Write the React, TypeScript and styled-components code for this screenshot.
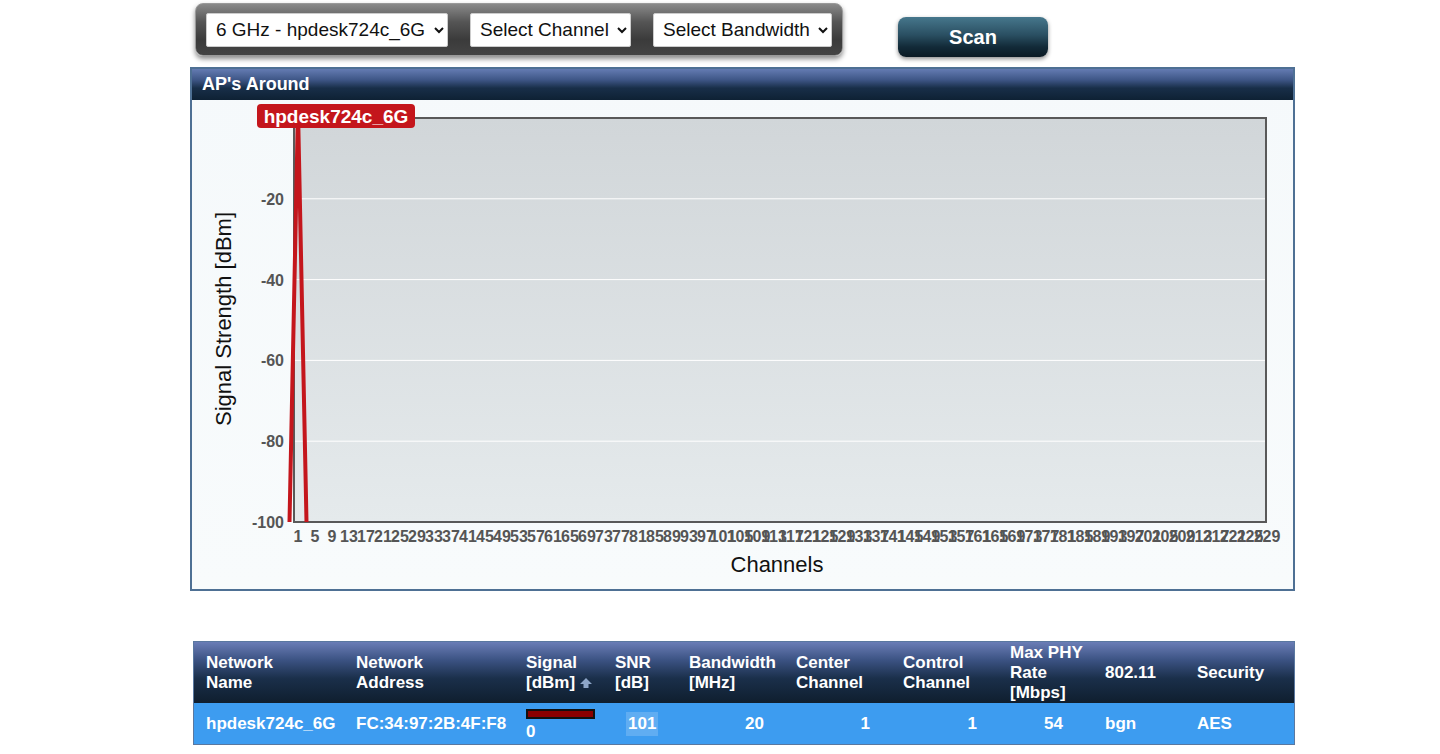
import React from 'react'
import styled, { createGlobalStyle } from 'styled-components'

const GlobalStyle = createGlobalStyle`
    body {
        margin: 0;
        background: #ffffff;
        font-family: 'Liberation Sans', Arial, sans-serif;
    }
`

const Page = styled.div`
    width: 1440px;
    padding-top: 3px;
`

const TopRow = styled.div`
    display: flex;
    align-items: flex-start;
    margin-left: 195px;
    gap: 55px;
    height: 64px;
`

const Toolbar = styled.div`
    display: flex;
    align-items: center;
    gap: 22px;
    width: 648px;
    height: 53px;
    box-sizing: border-box;
    padding: 0 10px;
    border: 1px solid #9a9a9a;
    border-radius: 8px;
    background: linear-gradient(#8a8a8a 0%, #555 35%, #3b3b3b 70%, #444 100%);
    box-shadow: 0 3px 5px rgba(0, 0, 0, 0.45);
`

const Select = styled.select<{ $w: number }>`
    width: ${(p) => p.$w}px;
    height: 34px;
    font-family: 'Liberation Sans', Arial, sans-serif;
    font-size: 19px;
    color: #111;
    background: #fff;
    border: 1px solid #ccc;
    border-radius: 2px;
    padding: 0 5px;
`

const ScanButton = styled.button`
    margin-top: 14px;
    width: 150px;
    height: 40px;
    border: none;
    border-radius: 8px;
    color: #fff;
    font-family: 'Liberation Sans', Arial, sans-serif;
    font-weight: bold;
    font-size: 20px;
    background: linear-gradient(#46778c 0%, #2a4f62 45%, #122a38 75%, #0b1a24 100%);
    box-shadow: 0 2px 4px rgba(0, 0, 0, 0.45);
`

const Panel = styled.div`
    margin-left: 190px;
    width: 1105px;
    box-sizing: border-box;
    border: 2px solid #4e7094;
    background: linear-gradient(#f5f9fb, #f8fbfc);
`

const PanelHeader = styled.div`
    height: 31px;
    display: flex;
    align-items: center;
    padding-left: 10px;
    color: #fff;
    font-weight: bold;
    font-size: 18px;
    background: linear-gradient(#647bb2 0%, #3e5686 35%, #182e48 62%, #0e2134 100%);
`

const Chart = styled.svg`
    display: block;
    width: 1101px;
    height: 489px;
    font-family: 'Liberation Sans', Arial, sans-serif;
`

const Table = styled.div`
    margin: 50px 0 0 193px;
    width: 1102px;
    box-sizing: border-box;
    border: 1px solid #5a78a0;
    color: #fff;
    font-weight: bold;
    font-size: 17px;
`

const cols = '150px 170px 89px 74px 107px 107px 107px 95px 92px 1fr'

const HeaderRow = styled.div`
    display: grid;
    grid-template-columns: ${cols};
    height: 61px;
    align-items: center;
    background: linear-gradient(#6a7db6 0%, #3b5282 30%, #1a2f4a 60%, #0f1e2e 100%);
    line-height: 20px;
`

const DataRow = styled.div`
    display: grid;
    grid-template-columns: ${cols};
    height: 41px;
    align-items: center;
    background: #3d9cf0;
`

const Cell = styled.div<{ $right?: number; $left?: number }>`
    padding-left: ${(p) => (p.$left !== undefined ? p.$left : 12)}px;
    padding-right: ${(p) => (p.$right !== undefined ? p.$right : 0)}px;
    text-align: ${(p) => (p.$right !== undefined ? 'right' : 'left')};
    white-space: nowrap;
`

const SignalCell = styled.div`
    padding-left: 12px;
    display: flex;
    flex-direction: column;
    align-items: flex-start;
    gap: 3px;
    margin-top: 4px;
`

const SignalBar = styled.div`
    width: 69px;
    height: 10px;
    box-sizing: border-box;
    border: 2px solid #111;
    background: #8b0000;
`

const Highlight = styled.span`
    display: inline-block;
    padding: 2px 2px;
    background: rgba(255, 255, 255, 0.18);
`

const plotX = 102
const plotY = 18
const plotW = 972
const plotH = 404
const yFor = (d: number) => plotY + (-d / 100) * plotH
const xFor = (c: number) => 106 + (c - 1) * 4.25

const channels: number[] = []
for (let c = 1; c <= 229; c += 4) channels.push(c)

const SortArrow = () => (
    <svg width="14" height="12" viewBox="0 0 14 12" style={{ marginLeft: 4, verticalAlign: 'middle' }}>
        <path d="M7 1 L13 7 H9.5 V11 H4.5 V7 H1 Z" fill="#8ea6c8" />
    </svg>
)

const App: React.FC = () => {
    return (
        <Page>
            <GlobalStyle />
            <TopRow>
                <Toolbar>
                    <Select $w={242} defaultValue="a">
                        <option value="a">6 GHz - hpdesk724c_6G</option>
                    </Select>
                    <Select $w={161} defaultValue="a">
                        <option value="a">Select Channel</option>
                    </Select>
                    <Select $w={179} defaultValue="a">
                        <option value="a">Select Bandwidth</option>
                    </Select>
                </Toolbar>
                <ScanButton>Scan</ScanButton>
            </TopRow>

            <Panel>
                <PanelHeader>AP's Around</PanelHeader>
                <Chart viewBox="0 0 1101 489">
                    <defs>
                        <linearGradient id="plotBg" x1="0" y1="0" x2="0" y2="1">
                            <stop offset="0" stopColor="#d1d6d9" />
                            <stop offset="1" stopColor="#e5eaec" />
                        </linearGradient>
                    </defs>
                    <rect x={plotX} y={plotY} width={plotW} height={plotH} fill="url(#plotBg)" />
                    {[-20, -40, -60, -80].map((d) => (
                        <line key={d} x1={plotX} x2={plotX + plotW} y1={yFor(d)} y2={yFor(d)} stroke="#fff" strokeWidth="1" />
                    ))}
                    <rect x={plotX} y={plotY} width={plotW} height={plotH} fill="none" stroke="#595959" strokeWidth="2" />
                    {[-20, -40, -60, -80, -100].map((d) => (
                        <text key={d} x={92} y={yFor(d) + 6} textAnchor="end" fontSize="16" fontWeight="bold" fill="#555">
                            {d}
                        </text>
                    ))}
                    {channels.map((c) => (
                        <text key={c} x={xFor(c)} y={442} textAnchor="middle" fontSize="16" fontWeight="bold" fill="#555">
                            {c}
                        </text>
                    ))}
                    <text x={585} y={472} textAnchor="middle" fontSize="22" fill="#111">
                        Channels
                    </text>
                    <text x={0} y={0} textAnchor="middle" fontSize="22" fill="#111" transform="translate(39 219) rotate(-90)">
                        Signal Strength [dBm]
                    </text>
                    <polyline
                        points={`${xFor(1) - 8.5},${plotY + plotH} ${xFor(1)},10 ${xFor(1) + 8.5},${plotY + plotH}`}
                        fill="none"
                        stroke="#c4161c"
                        strokeWidth="4"
                        strokeLinejoin="miter"
                    />
                    <rect x={65} y={4} width={158} height={24} rx={4} fill="#c4161c" />
                    <text x={144} y={23} textAnchor="middle" fontSize="19" fontWeight="bold" fill="#fff">
                        hpdesk724c_6G
                    </text>
                </Chart>
            </Panel>

            <Table>
                <HeaderRow>
                    <Cell>Network<br />Name</Cell>
                    <Cell>Network<br />Address</Cell>
                    <Cell>Signal<br />[dBm]<SortArrow /></Cell>
                    <Cell>SNR<br />[dB]</Cell>
                    <Cell>Bandwidth<br />[MHz]</Cell>
                    <Cell>Center<br />Channel</Cell>
                    <Cell>Control<br />Channel</Cell>
                    <Cell>Max PHY<br />Rate<br />[Mbps]</Cell>
                    <Cell>802.11</Cell>
                    <Cell>Security</Cell>
                </HeaderRow>
                <DataRow>
                    <Cell>hpdesk724c_6G</Cell>
                    <Cell>FC:34:97:2B:4F:F8</Cell>
                    <SignalCell>
                        <SignalBar />
                        <span>0</span>
                    </SignalCell>
                    <Cell $left={23}><Highlight>101</Highlight></Cell>
                    <Cell $right={20}>20</Cell>
                    <Cell $right={21}>1</Cell>
                    <Cell $right={21}>1</Cell>
                    <Cell $right={30}>54</Cell>
                    <Cell>bgn</Cell>
                    <Cell>AES</Cell>
                </DataRow>
            </Table>
        </Page>
    )
}

export default App
